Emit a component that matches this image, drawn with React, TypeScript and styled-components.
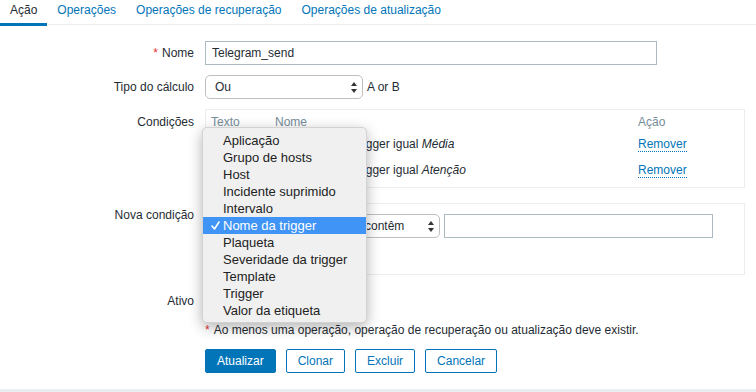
import React from "react";
import styled, { createGlobalStyle } from "styled-components";

const GlobalStyle = createGlobalStyle`
  * {
    box-sizing: border-box;
  }
  body {
    margin: 0;
    background: #ffffff;
    font-family: "Liberation Sans", Arial, sans-serif;
    font-size: 12px;
    color: #1f2c33;
  }
`;

const Page = styled.div`
  width: 756px;
  height: 392px;
  overflow: hidden;
  display: flex;
  flex-direction: column;
`;

const Tabs = styled.nav`
  display: flex;
  height: 25px;
  border-bottom: 1px solid #ebeef0;
`;

const Tab = styled.span<{ $active?: boolean }>`
  height: 26px;
  padding: 3px 10px 6px;
  line-height: 14px;
  white-space: nowrap;
  color: ${(p) => (p.$active ? "#1f2c33" : "#0275b8")};
  border-bottom: 3px solid ${(p) => (p.$active ? "#0275b8" : "transparent")};
`;

const Form = styled.div`
  display: flex;
  flex-direction: column;
  padding-top: 16px;
`;

const Row = styled.div<{ $mb?: number; $top?: boolean }>`
  display: grid;
  grid-template-columns: 194px 1fr;
  column-gap: 11px;
  align-items: ${(p) => (p.$top ? "start" : "center")};
  margin-bottom: ${(p) => p.$mb ?? 0}px;
`;

const Label = styled.div<{ $pt?: number }>`
  text-align: right;
  line-height: 14px;
  white-space: nowrap;
  padding-top: ${(p) => p.$pt ?? 0}px;
`;

const Asterisk = styled.span`
  color: #e33734;
  margin-right: 4px;
`;

const Field = styled.div`
  display: flex;
  align-items: center;
`;

const TextInput = styled.input<{ $w: number }>`
  width: ${(p) => p.$w}px;
  height: 24px;
  border: 1px solid #acbbc2;
  padding: 0 6px;
  font: inherit;
  color: #1f2c33;
  background: #fff;
  outline: none;
`;

const SelectBox = styled.div<{ $w: number }>`
  position: relative;
  width: ${(p) => p.$w}px;
  height: 24px;
  display: flex;
  align-items: center;
  justify-content: space-between;
  padding: 0 5px 0 9px;
  border: 1px solid #bfbfbf;
  border-radius: 5px;
  background: #fff;
  color: #1f2c33;
  flex-shrink: 0;
`;

const AfterText = styled.span`
  margin-left: 4px;
`;

const Box = styled.div`
  width: 540px;
  border: 1px solid #ebeef0;
`;

const CondTable = styled(Box)`
  padding-bottom: 4px;
`;

const TableRow = styled.div<{ $head?: boolean }>`
  display: grid;
  grid-template-columns: 64px 1fr 111px;
  align-items: center;
  line-height: 14px;
  height: ${(p) => (p.$head ? 21 : 26)}px;
  padding-top: ${(p) => (p.$head ? 5 : 0)}px;
  align-content: ${(p) => (p.$head ? "start" : "center")};
  color: ${(p) => (p.$head ? "#768d99" : "#1f2c33")};
`;

const Cell = styled.div`
  padding-left: 5px;
  white-space: nowrap;
`;

const LinkText = styled.span`
  color: #0275b8;
  border-bottom: 1px dotted #0275b8;
`;

const NewCondBox = styled(Box)`
  padding: 10px 5px 12px;
`;

const CondLine = styled.div`
  display: flex;
  align-items: center;
  gap: 4px;
`;

const AddLine = styled.div`
  margin-top: 10px;
  line-height: 14px;
`;

const Checkbox = styled.span`
  display: inline-flex;
  align-items: center;
  justify-content: center;
  width: 16px;
  height: 16px;
  border: 1px solid #acbbc2;
  background: #fff;
`;

const Note = styled.div`
  line-height: 14px;
  white-space: nowrap;
`;

const Buttons = styled.div`
  display: flex;
  gap: 10px;
`;

const Button = styled.button<{ $primary?: boolean }>`
  height: 24px;
  padding: 0 11px;
  border: 1px solid #0275b8;
  border-radius: 2px;
  font: inherit;
  background: ${(p) => (p.$primary ? "#0275b8" : "#ffffff")};
  color: ${(p) => (p.$primary ? "#ffffff" : "#0275b8")};
`;

const FooterStrip = styled.div`
  margin-top: auto;
  height: 3px;
  background: #ebeef0;
`;

/* native macOS popup list, opened from the first select of "Nova condição" */
const Menu = styled.ul`
  position: absolute;
  left: -10px;
  top: -88px;
  width: 165px;
  margin: 0;
  padding: 4px 0 3px;
  list-style: none;
  background: #f0f0f0;
  border-radius: 5px;
  border: 1px solid rgba(0, 0, 0, 0.12);
  box-shadow: 0 4px 14px rgba(0, 0, 0, 0.3);
  font-size: 13px;
  z-index: 10;
`;

const MenuItem = styled.li<{ $selected?: boolean }>`
  position: relative;
  height: 17px;
  line-height: 17px;
  padding-left: 20px;
  white-space: nowrap;
  color: ${(p) => (p.$selected ? "#ffffff" : "#222222")};
  background: ${(p) => (p.$selected ? "#3f94f5" : "transparent")};
`;

const Check = styled.svg`
  position: absolute;
  left: 8px;
  top: 4px;
`;

const Arrows: React.FC = () => (
  <svg width="6" height="11" viewBox="0 0 6 11">
    <path d="M3 0 L6 4 L0 4 Z" fill="#333" />
    <path d="M0 7 L6 7 L3 11 Z" fill="#333" />
  </svg>
);

const menuItems = [
  "Aplicação",
  "Grupo de hosts",
  "Host",
  "Incidente suprimido",
  "Intervalo",
  "Nome da trigger",
  "Plaqueta",
  "Severidade da trigger",
  "Template",
  "Trigger",
  "Valor da etiqueta",
];

const conditions = [
  { label: "A", text: "Severidade da trigger igual ", value: "Média" },
  { label: "B", text: "Severidade da trigger igual ", value: "Atenção" },
];

const App: React.FC = () => {
  return (
    <Page>
      <GlobalStyle />
      <Tabs>
        <Tab $active>Ação</Tab>
        <Tab>Operações</Tab>
        <Tab>Operações de recuperação</Tab>
        <Tab>Operações de atualização</Tab>
      </Tabs>

      <Form>
        <Row $mb={10}>
          <Label>
            <Asterisk>*</Asterisk>Nome
          </Label>
          <Field>
            <TextInput $w={452} defaultValue="Telegram_send" />
          </Field>
        </Row>

        <Row $mb={10}>
          <Label>Tipo do cálculo</Label>
          <Field>
            <SelectBox $w={158}>
              <span>Ou</span>
              <Arrows />
            </SelectBox>
            <AfterText>A or B</AfterText>
          </Field>
        </Row>

        <Row $mb={15} $top>
          <Label $pt={6}>Condições</Label>
          <CondTable>
            <TableRow $head>
              <Cell>Texto</Cell>
              <Cell>Nome</Cell>
              <Cell>Ação</Cell>
            </TableRow>
            {conditions.map((c) => (
              <TableRow key={c.label}>
                <Cell>{c.label}</Cell>
                <Cell>
                  {c.text}
                  <i>{c.value}</i>
                </Cell>
                <Cell>
                  <LinkText>Remover</LinkText>
                </Cell>
              </TableRow>
            ))}
          </CondTable>
        </Row>

        <Row $mb={18} $top>
          <Label $pt={5}>Nova condição</Label>
          <NewCondBox>
            <CondLine>
              <SelectBox $w={140}>
                <span>Nome da trigger</span>
                <Arrows />
                <Menu>
                  {menuItems.map((item) => (
                    <MenuItem key={item} $selected={item === "Nome da trigger"}>
                      {item === "Nome da trigger" && (
                        <Check width="9" height="9" viewBox="0 0 9 9">
                          <path
                            d="M1 5 L3.5 8 L8 1"
                            fill="none"
                            stroke="#fff"
                            strokeWidth="1.6"
                            strokeLinecap="round"
                            strokeLinejoin="round"
                          />
                        </Check>
                      )}
                      {item}
                    </MenuItem>
                  ))}
                </Menu>
              </SelectBox>
              <SelectBox $w={85}>
                <span>contêm</span>
                <Arrows />
              </SelectBox>
              <TextInput $w={269} />
            </CondLine>
            <AddLine>
              <LinkText>Adicionar</LinkText>
            </AddLine>
          </NewCondBox>
        </Row>

        <Row $mb={14}>
          <Label>Ativo</Label>
          <Field>
            <Checkbox>
              <svg width="10" height="8" viewBox="0 0 10 8">
                <path d="M1 4 L4 7 L9 1" fill="none" stroke="#0275b8" strokeWidth="2" />
              </svg>
            </Checkbox>
          </Field>
        </Row>

        <Row $mb={12}>
          <div />
          <Note>
            <Asterisk>*</Asterisk>Ao menos uma operação, operação de recuperação ou atualização deve existir.
          </Note>
        </Row>

        <Row>
          <div />
          <Buttons>
            <Button $primary>Atualizar</Button>
            <Button>Clonar</Button>
            <Button>Excluir</Button>
            <Button>Cancelar</Button>
          </Buttons>
        </Row>
      </Form>

      <FooterStrip />
    </Page>
  );
};

export default App;
